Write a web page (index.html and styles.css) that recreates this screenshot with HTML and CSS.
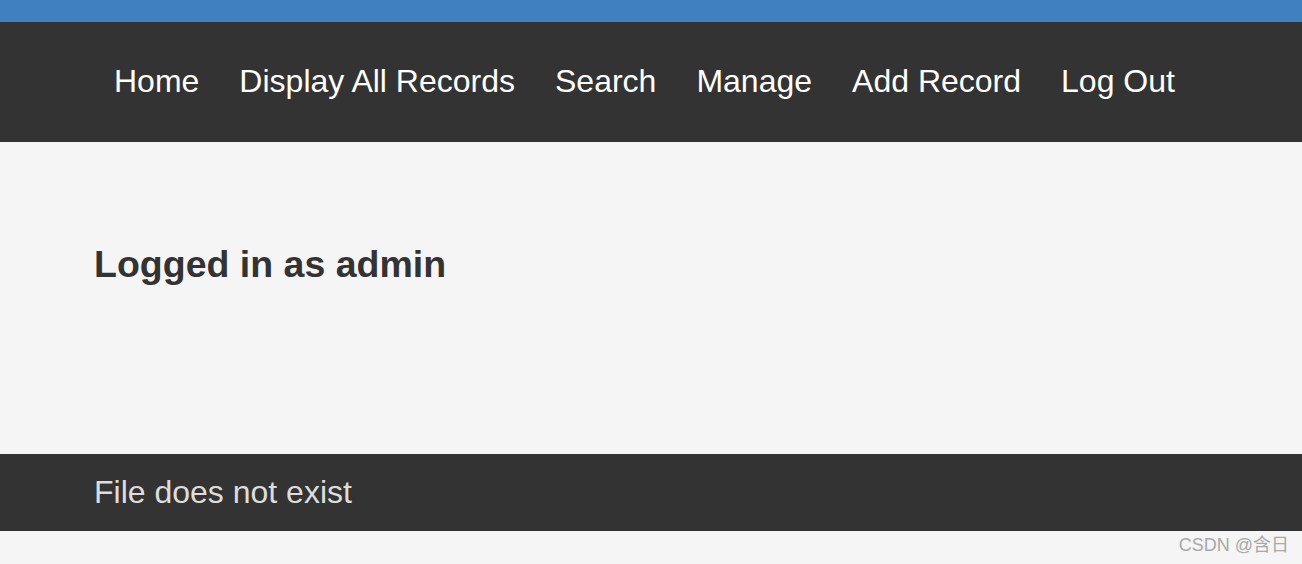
FILE: index.html
```html
<!DOCTYPE html>
<html lang="en">
<head>
<meta charset="utf-8">
<title>Records</title>
<link rel="stylesheet" href="styles.css">
</head>
<body>
<div class="topbar"></div>
<nav class="nav">
  <a class="nav-link" href="#">Home</a>
  <a class="nav-link" href="#">Display All Records</a>
  <a class="nav-link" href="#">Search</a>
  <a class="nav-link" href="#">Manage</a>
  <a class="nav-link" href="#">Add Record</a>
  <a class="nav-link" href="#">Log Out</a>
</nav>
<main class="main">
  <h1 class="title">Logged in as admin</h1>
</main>
<footer class="footer">
  <p class="footer-text">File does not exist</p>
</footer>
<div class="watermark">CSDN @含日</div>
</body>
</html>
```
FILE: styles.css
```css
html, body {
  margin: 0;
  padding: 0;
}
body {
  background: #f5f5f5;
  font-family: "Liberation Sans", Arial, Helvetica, sans-serif;
  color: #333;
}
.topbar {
  height: 22px;
  background: #4180c0;
}
.nav {
  height: 120px;
  background: #333333;
  display: flex;
  align-items: center;
  padding-left: 94px;
}
.nav-link {
  color: #ffffff;
  text-decoration: none;
  font-size: 32px;
  line-height: 37px;
  padding: 0 20px 2px;
}
.main {
  height: 312px;
  box-sizing: border-box;
  padding: 101px 94px 0;
}
.title {
  margin: 0;
  font-size: 37.5px;
  line-height: 42px;
  font-weight: bold;
  color: #333;
}
.footer {
  height: 77px;
  background: #333333;
  display: flex;
  align-items: center;
  padding: 0 94px;
}
.footer-text {
  margin: 0;
  font-size: 32px;
  line-height: 37px;
  color: #dddddd;
}
.watermark {
  height: 33px;
  box-sizing: border-box;
  padding: 3px 13px 0 0;
  text-align: right;
  font-size: 18px;
  line-height: 22px;
  color: #a8a8a8;
  font-family: "Liberation Sans", "Noto Sans CJK SC", sans-serif;
}
```
